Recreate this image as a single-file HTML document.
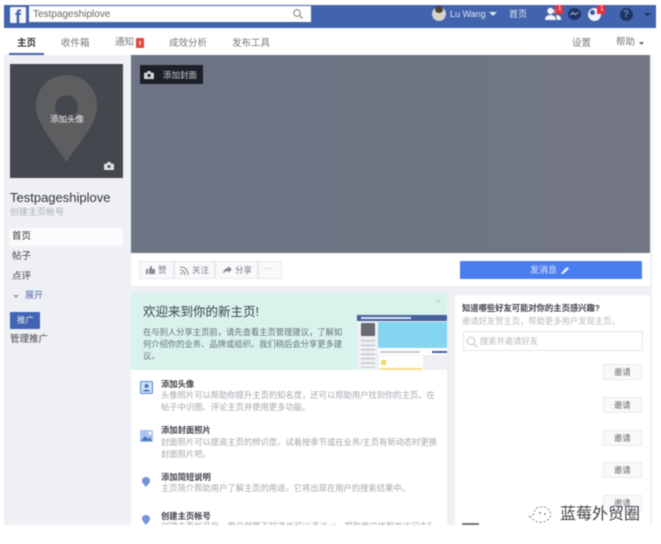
<!DOCTYPE html>
<html><head><meta charset="utf-8">
<style>
html,body{margin:0;padding:0;background:#fff;}
#p{position:relative;width:661px;height:544px;overflow:hidden;background:#fff;font-family:"Liberation Sans","Noto Sans CJK SC",sans-serif;filter:blur(0.65px);}
#p div,#p span.a,#p svg{position:absolute;}
.t{white-space:nowrap;line-height:1;}
.btn{background:#f9f9fb;border:1px solid #e9eaee;box-sizing:border-box;}
</style></head><body>
<div id="p">
<!-- grey bg -->
<div style="left:4px;top:55px;width:648px;height:470px;background:#eef0f4"></div>
<!-- top bar -->
<div style="left:4px;top:5px;width:652px;height:23px;background:#4263ad"></div>
<div style="left:10px;top:7px;width:16px;height:16px;background:#f4f6fb;border-radius:1px"></div>
<div class="t" style="left:15px;top:7px;font:bold 18px 'Liberation Sans';color:#4263ad">f</div>
<div style="left:29px;top:6px;width:282px;height:16px;background:#fff"></div>
<div class="t" style="left:33px;top:10px;font-size:10px;color:#666">Testpageshiplove</div>
<svg style="left:292px;top:8px" width="12" height="12" viewBox="0 0 12 12"><circle cx="5" cy="5" r="3.300" fill="none" stroke="#999" stroke-width="1.300"/><path d="M7.500 7.500L10.500 10.500" stroke="#999" stroke-width="1.500"/></svg>
<!-- user -->
<div style="left:432px;top:7px;width:14px;height:14px;border-radius:50%;background:#d6d2cc"></div>
<div style="left:435px;top:6px;width:8px;height:7px;border-radius:50%;background:#4b4436"></div>
<div class="t" style="left:450px;top:10px;font-size:9px;color:#dfe5f2">Lu Wang</div>
<svg style="left:489px;top:12px" width="8" height="5"><path d="M0 0H8L4 4Z" fill="#dfe5f2"/></svg>
<div class="t" style="left:509px;top:10px;font-size:9px;color:#dfe5f2">首页</div>
<svg style="left:545px;top:7px" width="16" height="14" viewBox="0 0 16 14"><circle cx="5.500" cy="4" r="3.200" fill="#f3f5fa"/><path d="M0 13C0 9 3 8 5.500 8S11 9 11 13Z" fill="#f3f5fa"/><circle cx="11.500" cy="4.500" r="2.500" fill="#f3f5fa"/><path d="M11 8C14 8 16 9 16 13H12Z" fill="#f3f5fa"/></svg>
<div style="left:555px;top:5px;width:8px;height:9px;background:#e8323f;border-radius:1px"></div>
<div class="t" style="left:558px;top:6px;font-size:6px;color:#fff">1</div>
<div style="left:568px;top:8px;width:13px;height:12px;border-radius:50%;background:#1f3563"></div>
<svg style="left:570px;top:11px" width="9" height="6"><path d="M0.500 4L3 1.500L5 3.500L8.500 1.500" stroke="#aebbd8" fill="none"/></svg>
<div style="left:588px;top:8px;width:13px;height:13px;border-radius:50%;background:#eef1f8"></div>
<div style="left:590px;top:10px;width:5px;height:5px;border-radius:50%;background:#3f5a9e"></div>
<div style="left:597px;top:5px;width:8px;height:9px;background:#e8323f;border-radius:1px"></div>
<div class="t" style="left:600px;top:6px;font-size:6px;color:#fff">1</div>
<div style="left:620px;top:8px;width:13px;height:13px;border-radius:50%;background:#1f3563"></div>
<div class="t" style="left:623px;top:9px;font:bold 10px 'Liberation Sans';color:#6b83b8">?</div>
<svg style="left:644px;top:13px" width="7" height="4"><path d="M0 0H7L3.500 3.500Z" fill="#1f3563"/></svg>
<!-- tabs -->
<div class="t" style="left:17px;top:39px;font-size:9.500px;font-weight:bold;color:#333">主页</div>
<div style="left:9px;top:53px;width:35px;height:2px;background:#4263ad"></div>
<div class="t" style="left:61px;top:39px;font-size:9.500px;color:#777">收件箱</div>
<div class="t" style="left:115px;top:38px;font-size:9.500px;color:#777">通知</div>
<div style="left:136px;top:38px;width:8px;height:10px;background:#e0473f;border-radius:1px"></div>
<div style="left:139px;top:41px;width:2px;height:4px;background:#f6b5b0"></div>
<div class="t" style="left:169px;top:39px;font-size:9.500px;color:#777">成效分析</div>
<div class="t" style="left:232px;top:39px;font-size:9.500px;color:#777">发布工具</div>
<div class="t" style="left:572px;top:39px;font-size:9.500px;color:#777">设置</div>
<div class="t" style="left:616px;top:38px;font-size:9.500px;color:#777">帮助</div>
<svg style="left:639px;top:42px" width="5" height="3"><path d="M0 0H5L2.500 3Z" fill="#666"/></svg>
<!-- profile -->
<div style="left:10px;top:64px;width:113px;height:114px;background:#45474e"></div>
<svg style="left:36px;top:75px" width="61" height="88" viewBox="0 0 61 88"><path d="M30.500 0C13 0 0 13 0 31C0 50 20 70 30.500 87C41 70 61 50 61 31C61 13 48 0 30.500 0Z" fill="#5c5e5f"/><circle cx="30.500" cy="32" r="11.500" fill="#45474e"/></svg>
<div class="t" style="left:50px;top:115px;font-size:8.500px;color:#eee">添加头像</div>
<svg style="left:104px;top:162px" width="10" height="8" viewBox="0 0 11 9"><path d="M0 2H3L4 0H7L8 2H11V9H0Z" fill="#e4e4e6"/><circle cx="5.500" cy="5" r="1.800" fill="#55565b"/></svg>
<div class="t" style="left:10px;top:191px;font-size:13px;color:#32353c">Testpageshiplove</div>
<div class="t" style="left:10px;top:208px;font-size:9px;color:#adb0b7">创建主页帐号</div>
<div style="left:9px;top:228px;width:114px;height:18px;background:#fbfbfd"></div>
<div class="t" style="left:12px;top:232px;font-size:9.500px;color:#333">首页</div>
<div class="t" style="left:12px;top:252px;font-size:9.500px;color:#444">帖子</div>
<div class="t" style="left:12px;top:272px;font-size:9.500px;color:#444">点评</div>
<svg style="left:13px;top:295px" width="6" height="4"><path d="M0 0H6L3 3Z" fill="#99a"/></svg>
<div class="t" style="left:25px;top:291px;font-size:9px;color:#5870aa">展开</div>
<div style="left:10px;top:312px;width:30px;height:17px;background:#4264b4;border-radius:1px"></div>
<div class="t" style="left:17px;top:316px;font-size:8.500px;color:#e8edf8">推广</div>
<div class="t" style="left:10px;top:335px;font-size:9.500px;color:#444">管理推广</div>
<!-- cover -->
<div style="left:131px;top:55px;width:519px;height:198px;background:linear-gradient(90deg,#6d7484,#6f7583 50%,#727782)"></div>
<div style="left:140px;top:65px;width:63px;height:19px;background:#1d2028"></div>
<svg style="left:144px;top:71px" width="10" height="8" viewBox="0 0 11 9"><path d="M0 2H3L4 0H7L8 2H11V9H0Z" fill="#d6d7da"/><circle cx="5.500" cy="5" r="1.800" fill="#1d2028"/></svg>
<div class="t" style="left:163px;top:71px;font-size:8.500px;color:#c8cad0">添加封面</div>
<!-- actions -->
<div style="left:131px;top:253px;width:519px;height:33px;background:#fff"></div>
<div class="btn" style="left:139px;top:261px;width:35px;height:18px"></div>
<div class="btn" style="left:174px;top:261px;width:41px;height:18px"></div>
<div class="btn" style="left:215px;top:261px;width:43px;height:18px"></div>
<div class="btn" style="left:258px;top:261px;width:24px;height:18px"></div>
<svg style="left:146px;top:266px" width="9" height="8"><path d="M0 3H2V8H0ZM3 3L5 0H6V3H9V8H3Z" fill="#858a95"/></svg>
<div class="t" style="left:158px;top:266px;font-size:8.500px;color:#777c85">赞</div>
<svg style="left:180px;top:266px" width="9" height="9" viewBox="0 0 9 9"><circle cx="1.500" cy="7.500" r="1" fill="#888"/><path d="M0 4C3 4 5 6 5 9M0 1C5 1 8 4 8 9" fill="none" stroke="#888"/></svg>
<div class="t" style="left:192px;top:266px;font-size:8.500px;color:#777c85">关注</div>
<svg style="left:223px;top:266px" width="9" height="8"><path d="M5 0L9 3.500L5 7V5C3 5 1 6 0 8C0 5 2 2 5 2Z" fill="#858a95"/></svg>
<div class="t" style="left:235px;top:266px;font-size:8.500px;color:#777c85">分享</div>
<div class="t" style="left:265px;top:265px;font-size:8px;color:#888">···</div>
<div style="left:460px;top:261px;width:182px;height:18px;background:#4a7ef0;border-radius:1px"></div>
<div class="t" style="left:530px;top:266px;font-size:9px;color:#dfe8fb">发消息</div>
<svg style="left:561px;top:266px" width="9" height="9"><path d="M0 8L1 6L6 1L8 2.500L3 7.500Z" fill="#e8effc"/></svg>
<!-- welcome -->
<div style="left:131px;top:293px;width:316px;height:77px;background:#d9f3ec"></div>
<div class="t" style="left:143px;top:306px;font-size:12.500px;color:#3c4148">欢迎来到你的新主页!</div>
<div class="t" style="left:143px;top:326px;font-size:8.300px;line-height:12px;white-space:normal;width:200px;color:#66707a">在与别人分享主页前，请先查看主页管理建议，了解如何介绍你的业务、品牌或组织。我们稍后会分享更多建议。</div>
<div class="t" style="left:436px;top:298px;font-size:8px;color:#a5c4bd">×</div>
<!-- mini preview -->
<div style="left:357px;top:315px;width:90px;height:55px;background:#eef0f3"></div>
<div style="left:357px;top:315px;width:90px;height:6px;background:#44609f"></div>
<div style="left:361px;top:317px;width:50px;height:2px;background:#dfe6f3"></div>
<div style="left:378px;top:322px;width:69px;height:26px;background:#84d5ef"></div>
<div style="left:361px;top:323px;width:14px;height:13px;background:#686b72"></div>
<div style="left:361px;top:340px;width:14px;height:28px;background:repeating-linear-gradient(#c4c8ce 0 1.500px,#eef0f3 1.500px 4.500px)"></div>
<div style="left:378px;top:348px;width:69px;height:7px;background:#fff"></div>
<div style="left:432px;top:351px;width:15px;height:2px;background:#44609f"></div>
<div style="left:380px;top:351px;width:40px;height:1.500px;background:#c8ccd2"></div>
<div style="left:379px;top:356px;width:44px;height:14px;background:#fff"></div>
<div style="left:381px;top:360px;width:5px;height:5px;background:#f2d76a"></div>
<div style="left:380px;top:368px;width:42px;height:2px;background:#f4df8a"></div>
<!-- list -->
<div style="left:131px;top:370px;width:316px;height:155px;background:#fff"></div>
<svg style="left:140px;top:381px" width="13" height="13"><rect x="0.500" y="0.500" width="12" height="12" rx="1" fill="#cfe0f7" stroke="#5b86d3"/><circle cx="6.500" cy="5" r="2" fill="#4a73c0"/><path d="M3 10.500C3 8 10 8 10 10.500Z" fill="#4a73c0"/></svg>
<div class="t" style="left:161px;top:380px;font-size:8.300px;font-weight:bold;color:#3d4048">添加头像</div>
<div class="t" style="left:161px;top:390px;width:279px;white-space:normal;font-size:8.300px;line-height:11.500px;color:#a3a7ae">头像照片可以帮助你提升主页的知名度，还可以帮助用户找到你的主页。在帖子中识图、评论主页并使用更多功能。</div>
<svg style="left:140px;top:430px" width="13" height="12"><rect width="13" height="12" rx="1" fill="#a9c4ef"/><path d="M1 11L5 6L8 9L10 7L12 11Z" fill="#4a73c0"/><circle cx="10" cy="3" r="1.500" fill="#fff"/></svg>
<div class="t" style="left:161px;top:426px;font-size:8.300px;font-weight:bold;color:#3d4048">添加封面照片</div>
<div class="t" style="left:161px;top:437px;width:279px;white-space:normal;font-size:8.300px;line-height:11.500px;color:#a3a7ae">封面照片可以提高主页的辨识度。试着按季节或在业务/主页有新动态时更换封面照片吧。</div>
<svg style="left:142px;top:477px" width="8" height="10"><path d="M4 0C6.500 0 8 1.700 8 3.800C8 6 5.500 8 4 10C2.500 8 0 6 0 3.800C0 1.700 1.500 0 4 0Z" fill="#6f95dc"/></svg>
<div class="t" style="left:161px;top:473px;font-size:8.300px;font-weight:bold;color:#3d4048">添加简短说明</div>
<div class="t" style="left:161px;top:484px;font-size:8.300px;color:#a3a7ae">主页简介帮助用户了解主页的用途。它将出现在用户的搜索结果中。</div>
<svg style="left:142px;top:515px" width="8" height="10"><path d="M4 0C6.500 0 8 1.700 8 3.800C8 6 5.500 8 4 10C2.500 8 0 6 0 3.800C0 1.700 1.500 0 4 0Z" fill="#6f95dc"/></svg>
<div class="t" style="left:161px;top:512px;font-size:8.300px;font-weight:bold;color:#3d4048">创建主页帐号</div>
<div style="left:161px;top:522px;width:270px;height:3px;overflow:hidden"><div class="t" style="left:0;top:0;font-size:8.300px;color:#a3a7ae">创建主页帐号后，用户就算不知道也可以通过uri，帮助用户找到并访问主页</div></div>
<!-- right card -->
<div style="left:455px;top:295px;width:195px;height:230px;background:#fff;border-radius:2px"></div>
<div class="t" style="left:462px;top:304px;font-size:8.300px;font-weight:bold;color:#3d4048">知道哪些好友可能对你的主页感兴趣?</div>
<div class="t" style="left:462px;top:317px;font-size:8.300px;color:#b6b9bf">邀请好友赞主页，帮助更多用户发现主页。</div>
<div style="left:463px;top:331px;width:180px;height:20px;box-sizing:border-box;border:1px solid #e4e6ea;background:#fff"></div>
<svg style="left:466px;top:336px" width="12" height="12"><circle cx="5" cy="5" r="3.800" fill="none" stroke="#c4c6cb"/><path d="M8 8L11 11" stroke="#c4c6cb" stroke-width="1.300"/></svg>
<div class="t" style="left:480px;top:337px;font-size:8.300px;color:#b8bac0">搜索并邀请好友</div>
<div class="btn" style="left:603px;top:364px;width:39px;height:16px"></div>
<div class="t" style="left:614px;top:368px;font-size:8.300px;color:#666">邀请</div>
<div class="btn" style="left:603px;top:397px;width:39px;height:16px"></div>
<div class="t" style="left:614px;top:401px;font-size:8.300px;color:#666">邀请</div>
<div class="btn" style="left:603px;top:430px;width:39px;height:16px"></div>
<div class="t" style="left:614px;top:434px;font-size:8.300px;color:#666">邀请</div>
<div class="btn" style="left:603px;top:462px;width:39px;height:16px"></div>
<div class="t" style="left:614px;top:466px;font-size:8.300px;color:#666">邀请</div>
<div class="btn" style="left:603px;top:495px;width:39px;height:16px"></div>
<div class="t" style="left:614px;top:499px;font-size:8.300px;color:#666">邀请</div>
<div style="left:462px;top:523px;width:17px;height:2px;background:#777"></div>
<!-- watermark -->
<svg style="left:526px;top:504px" width="28" height="22" viewBox="0 0 28 22"><path d="M3 13L8 10C8 5 12 2 16 3C22 2 26 8 24 13C22 18 14 20 9 17L4 13" fill="#fff" fill-opacity=".7" stroke="#555" stroke-width=".7" stroke-dasharray="2 2"/><circle cx="14" cy="9" r=".8" fill="#444"/><circle cx="19" cy="10" r=".8" fill="#444"/></svg>
<div class="t" style="left:560px;top:507px;font-size:16px;color:#3f4247;text-shadow:0 0 2px #fff,0 0 2px #fff">蓝莓外贸圈</div>
</div>
</body></html>
